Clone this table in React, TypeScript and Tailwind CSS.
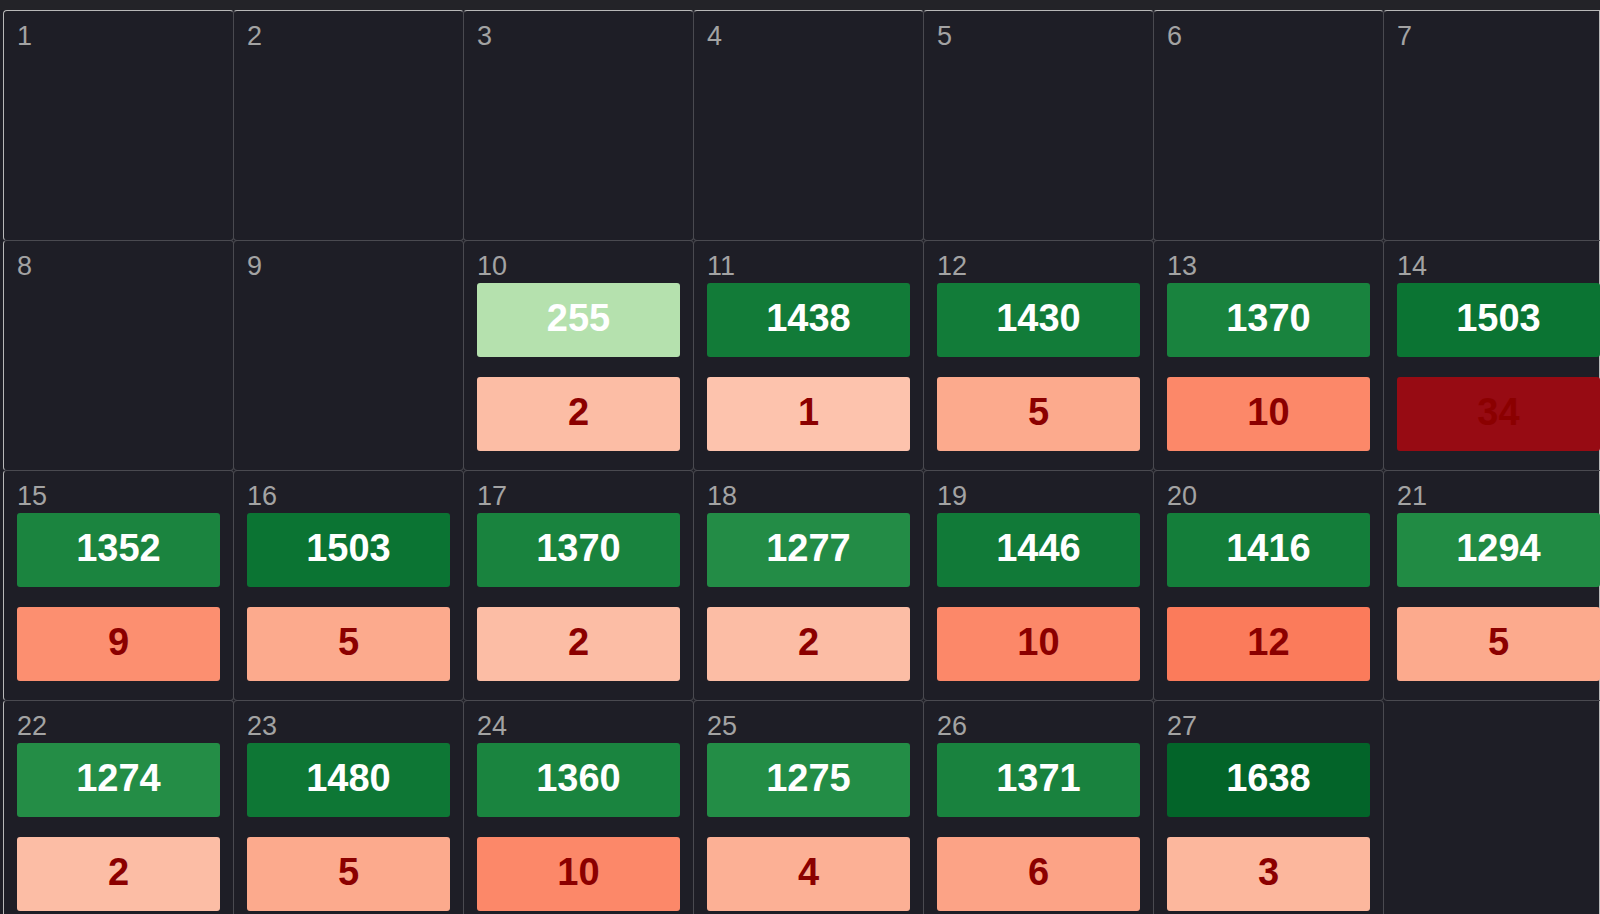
import React from "react";

const GREENS = ["f7fcf5", "e5f5e0", "c7e9c0", "a1d99b", "74c476", "41ab5d", "238b45", "006d2c", "00441b"];
const REDS = ["fff5f0", "fee0d2", "fcbba1", "fc9272", "fb6a4a", "ef3b2c", "cb181d", "a50f15", "67000d"];

function basis(t1: number, v0: number, v1: number, v2: number, v3: number) {
  const t2 = t1 * t1;
  const t3 = t2 * t1;
  return (
    ((1 - 3 * t1 + 3 * t2 - t3) * v0 +
      (4 - 6 * t2 + 3 * t3) * v1 +
      (1 + 3 * t1 + 3 * t2 - 3 * t3) * v2 +
      t3 * v3) /
    6
  );
}

function channel(values: number[], tIn: number) {
  const n = values.length - 1;
  let t = tIn;
  let i: number;
  if (t <= 0) {
    t = 0;
    i = 0;
  } else if (t >= 1) {
    t = 1;
    i = n - 1;
  } else {
    i = Math.floor(t * n);
  }
  const v1 = values[i];
  const v2 = values[i + 1];
  const v0 = i > 0 ? values[i - 1] : 2 * v1 - v2;
  const v3 = i < n - 1 ? values[i + 2] : 2 * v2 - v1;
  return basis((t - i / n) * n, v0, v1, v2, v3);
}

function ramp(scheme: string[]) {
  const r = scheme.map((h) => parseInt(h.slice(0, 2), 16));
  const g = scheme.map((h) => parseInt(h.slice(2, 4), 16));
  const b = scheme.map((h) => parseInt(h.slice(4, 6), 16));
  return (t: number) => {
    const c = (v: number) => Math.max(0, Math.min(255, Math.round(v)));
    return `rgb(${c(channel(r, t))}, ${c(channel(g, t))}, ${c(channel(b, t))})`;
  };
}

const greens = ramp(GREENS);
const reds = ramp(REDS);

type Entry = { a: number; b: number };

const DATA: Record<number, Entry> = {
  10: { a: 255, b: 2 },
  11: { a: 1438, b: 1 },
  12: { a: 1430, b: 5 },
  13: { a: 1370, b: 10 },
  14: { a: 1503, b: 34 },
  15: { a: 1352, b: 9 },
  16: { a: 1503, b: 5 },
  17: { a: 1370, b: 2 },
  18: { a: 1277, b: 2 },
  19: { a: 1446, b: 10 },
  20: { a: 1416, b: 12 },
  21: { a: 1294, b: 5 },
  22: { a: 1274, b: 2 },
  23: { a: 1480, b: 5 },
  24: { a: 1360, b: 10 },
  25: { a: 1275, b: 4 },
  26: { a: 1371, b: 6 },
  27: { a: 1638, b: 3 },
};

const MAX_A = Math.max(...Object.values(DATA).map((d) => d.a));
const MAX_B = Math.max(...Object.values(DATA).map((d) => d.b));

function DayCell({ day, index }: { day: number; index: number }) {
  const entry = DATA[day];
  const firstRow = index < 7;
  const firstCol = index % 7 === 0;
  return (
    <div
      className={
        "-mr-px -mb-px flex flex-col rounded-[4px] border border-[#4a4a50] px-[13px] pt-[12px] " +
        (firstRow ? "border-t-[#b8b8b8] " : "") +
        (firstCol ? "border-l-[#b8b8b8]" : "")
      }
    >
      <div className="text-[27px] leading-none text-[#a3a3a3]">{day}</div>
      {entry && (
        <>
          <div
            className="mt-[3px] flex h-[74px] items-center justify-center rounded-[3px] pb-[5px] text-[38px] font-bold leading-none text-white"
            style={{ backgroundColor: greens(0.2 + (0.7 * entry.a) / MAX_A) }}
          >
            {entry.a}
          </div>
          <div
            className="mt-[20px] flex h-[74px] items-center justify-center rounded-[3px] pb-[5px] text-[38px] font-bold leading-none text-[#8b0000]"
            style={{ backgroundColor: reds(0.2 + (0.7 * entry.b) / MAX_B) }}
          >
            {entry.b}
          </div>
        </>
      )}
    </div>
  );
}

export default function App() {
  const days = Array.from({ length: 27 }, (_, i) => i + 1);
  return (
    <div className="h-[914px] w-[1600px] overflow-hidden bg-[#1e1e26] font-['Liberation_Sans',Arial,sans-serif]">
      <div className="h-[10px] bg-[#232328]" />
      <div className="ml-[3px] w-[1597px] border-r border-[#b8b8b8]">
        <div className="grid w-[1611px] grid-cols-[repeat(7,230px)] auto-rows-[230px]">
          {days.map((d, i) => (
            <DayCell key={d} day={d} index={i} />
          ))}
        </div>
      </div>
    </div>
  );
}
